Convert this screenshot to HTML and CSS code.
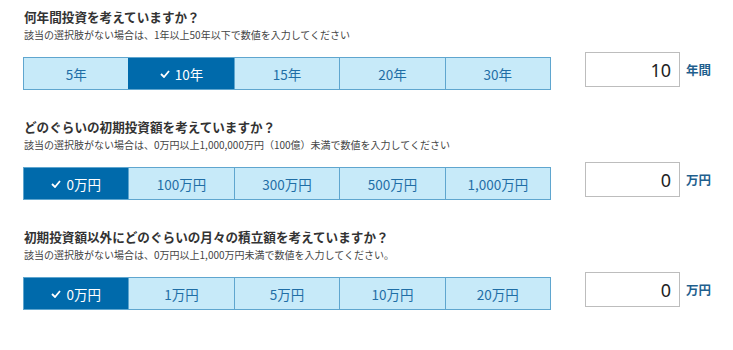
FILE: index.html
```html
<!DOCTYPE html>
<html>
    <head>
        <title>積立シミュレーション</title>
        <meta charset="UTF-8">
        <link rel="stylesheet" href="styles.css">
    </head>
    <body>
        <div class="sim">
            <section class="question">
                <h2>何年間投資を考えていますか？</h2>
                <p class="note">該当の選択肢がない場合は、1年以上50年以下で数値を入力してください</p>
                <div class="answer">
                    <div class="choices">
                        <button class="choice">5年</button>
                        <button class="choice selected"><svg class="check" viewBox="0 0 10 8"><polyline points="1,4 4,7 9,1"/></svg>10年</button>
                        <button class="choice">15年</button>
                        <button class="choice">20年</button>
                        <button class="choice">30年</button>
                    </div>
                    <div class="custom">
                        <input type="text" value="10">
                        <span class="unit">年間</span>
                    </div>
                </div>
            </section>

            <section class="question">
                <h2>どのぐらいの初期投資額を考えていますか？</h2>
                <p class="note">該当の選択肢がない場合は、0万円以上1,000,000万円（100億）未満で数値を入力してください</p>
                <div class="answer">
                    <div class="choices">
                        <button class="choice selected"><svg class="check" viewBox="0 0 10 8"><polyline points="1,4 4,7 9,1"/></svg>0万円</button>
                        <button class="choice">100万円</button>
                        <button class="choice">300万円</button>
                        <button class="choice">500万円</button>
                        <button class="choice">1,000万円</button>
                    </div>
                    <div class="custom">
                        <input type="text" value="0">
                        <span class="unit">万円</span>
                    </div>
                </div>
            </section>

            <section class="question">
                <h2>初期投資額以外にどのぐらいの月々の積立額を考えていますか？</h2>
                <p class="note">該当の選択肢がない場合は、0万円以上1,000万円未満で数値を入力してください。</p>
                <div class="answer">
                    <div class="choices">
                        <button class="choice selected"><svg class="check" viewBox="0 0 10 8"><polyline points="1,4 4,7 9,1"/></svg>0万円</button>
                        <button class="choice">1万円</button>
                        <button class="choice">5万円</button>
                        <button class="choice">10万円</button>
                        <button class="choice">20万円</button>
                    </div>
                    <div class="custom">
                        <input type="text" value="0">
                        <span class="unit">万円</span>
                    </div>
                </div>
            </section>
        </div>
    </body>
</html>
```

FILE: styles.css
```css
body {
    margin: 0;
    background-color: #fff;
    font-family: "Noto Sans CJK JP", "Noto Sans", sans-serif;
    color: #333;
}
.sim {
    padding: 7px 0 0 23px;
}
.question {
    margin-bottom: 27px;
}
.question h2 {
    margin: 0;
    font-size: 12.6px;
    line-height: 20px;
    font-weight: bold;
    color: #333;
    padding-left: 1px;
}
.note {
    margin: 0;
    font-size: 10px;
    line-height: 16px;
    color: #444;
    padding-left: 1px;
}
.answer {
    display: flex;
    align-items: flex-start;
    margin-top: 14px;
}
.choices {
    display: flex;
    width: 528px;
    height: 33px;
    border: 1px solid #5fa6cf;
    box-sizing: border-box;
}
.choice {
    flex: 1;
    display: flex;
    align-items: center;
    justify-content: center;
    gap: 5px;
    margin: 0;
    padding: 0;
    border: none;
    border-left: 1px solid #5fa6cf;
    background-color: #c7eaf9;
    color: #1f6ea6;
    font-family: inherit;
    font-size: 13.5px;
}
.choice:first-child {
    border-left: none;
}
.choice.selected {
    background-color: #006aab;
    color: #fff;
    border-left-color: #006aab;
}
.choice.selected + .choice {
    border-left-color: #5fa6cf;
}
.check {
    width: 10px;
    height: 8px;
    fill: none;
    stroke: #fff;
    stroke-width: 1.8;
}
.custom {
    display: flex;
    align-items: center;
    margin-left: 34px;
    margin-top: -5px;
}
.custom input {
    width: 95px;
    height: 35px;
    box-sizing: border-box;
    border: 1px solid #bdbdbd;
    padding: 0 8px;
    text-align: right;
    font-family: "Noto Sans", sans-serif;
    font-size: 18px;
    color: #222;
    background-color: #fff;
}
.unit {
    margin-left: 6px;
    font-size: 12.5px;
    font-weight: bold;
    color: #1f5f8e;
}
```
